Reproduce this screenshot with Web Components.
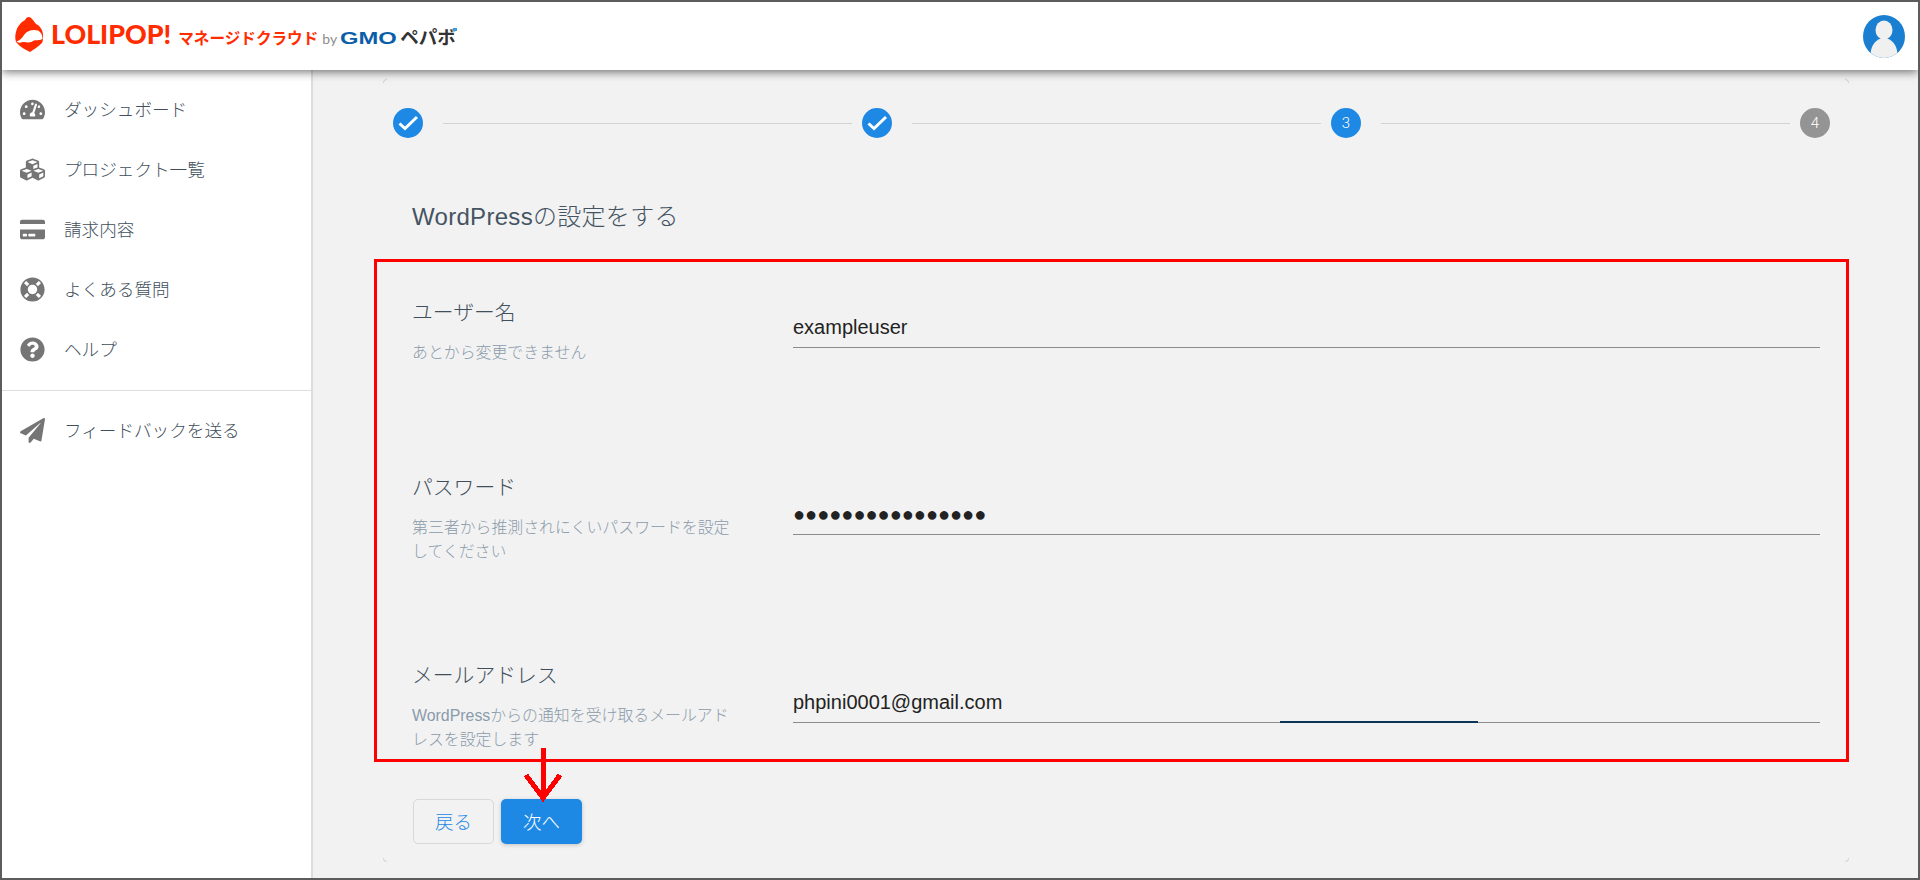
<!DOCTYPE html>
<html lang="ja"><head><meta charset="utf-8"><title>LOLIPOP マネージドクラウド</title>
<style>
html,body{margin:0;padding:0;height:880px;overflow:hidden;background:#f2f2f2;font-family:"Liberation Sans","Noto Sans CJK JP",sans-serif}
</style></head>
<body>
<app-shell>
  <app-header slot="header"></app-header>
  <side-nav slot="nav">
    <nav-item icon="gauge">ダッシュボード</nav-item>
    <nav-item icon="cubes">プロジェクト一覧</nav-item>
    <nav-item icon="card">請求内容</nav-item>
    <nav-item icon="ring">よくある質問</nav-item>
    <nav-item icon="help">ヘルプ</nav-item>
    <nav-item icon="plane" slot="after">フィードバックを送る</nav-item>
  </side-nav>
  <wizard-card slot="main">
    <step-bar></step-bar>
    <h2>WordPressの設定をする</h2>
    <form-row label="ユーザー名" sub="あとから変更できません"><text-field>exampleuser</text-field></form-row>
    <form-row label="パスワード" sub="第三者から推測されにくいパスワードを設定してください"><text-field>●●●●●●●●●●●●●●●●</text-field></form-row>
    <form-row label="メールアドレス" sub="WordPressからの通知を受け取るメールアドレスを設定します"><text-field focus>phpini0001@gmail.com</text-field></form-row>
    <wizard-actions></wizard-actions>
  </wizard-card>
  <annot-overlay slot="overlay"></annot-overlay>
</app-shell>
<script>
const ICONS={
gauge:['0 0 576 512','M288 32C128.94 32 0 160.94 0 320c0 52.8 14.25 102.26 39.06 144.8 5.61 9.62 16.3 15.2 27.44 15.2h443c11.14 0 21.83-5.58 27.44-15.2C561.75 422.26 576 372.8 576 320c0-159.06-128.94-288-288-288zm0 64c14.71 0 26.58 10.13 30.32 23.65-1.11 2.26-2.64 4.23-3.45 6.67l-9.22 27.67c-5.13 3.49-10.97 6.01-17.64 6.01-17.67 0-32-14.33-32-32S270.33 96 288 96zM96 384c-17.67 0-32-14.33-32-32s14.33-32 32-32 32 14.33 32 32-14.33 32-32 32zm48-160c-17.67 0-32-14.33-32-32s14.33-32 32-32 32 14.33 32 32-14.33 32-32 32zm246.77-72.41l-61.33 184C343.13 347.33 352 364.54 352 384c0 11.72-3.38 22.55-8.88 32H232.88c-5.5-9.45-8.88-20.28-8.88-32 0-33.94 26.5-61.43 59.9-63.59l61.34-184.01c4.17-12.56 17.73-19.45 30.36-15.17 12.57 4.19 19.35 17.79 15.17 30.36zm14.66 57.2l15.52-46.55c3.47-1.29 7.13-2.23 11.05-2.23 17.67 0 32 14.33 32 32s-14.33 32-32 32c-11.38-.01-20.89-6.28-26.57-15.22zM480 384c-17.67 0-32-14.33-32-32s14.33-32 32-32 32 14.33 32 32-14.33 32-32 32z'],
cubes:['0 0 512 512','M488.6 250.2L392 214V105.5c0-15-9.3-28.4-23.4-33.7l-100-37.5c-8.1-3.1-17.1-3.1-25.3 0l-100 37.5c-14.1 5.3-23.4 18.7-23.4 33.7V214l-96.6 36.2C9.3 255.5 0 268.9 0 283.9V394c0 13.6 7.7 26.1 19.9 32.2l100 50c10.1 5.1 22.1 5.1 32.2 0l103.9-52 103.9 52c10.1 5.1 22.1 5.1 32.2 0l100-50c12.2-6.1 19.9-18.6 19.9-32.2V283.9c0-15-9.3-28.4-23.4-33.7zM358 214.8l-85 31.9v-68.2l85-37v73.3zM154 104.1l102-38.2 102 38.2v.6l-102 41.4-102-41.4v-.6zm84 291.1l-85 42.5v-79.1l85-38.8v75.4zm0-112l-102 41.4-102-41.4v-.6l102-38.2 102 38.2v.6zm240 112l-85 42.5v-79.1l85-38.8v75.4zm0-112l-102 41.4-102-41.4v-.6l102-38.2 102 38.2v.6z'],
card:['0 0 576 512','M0 432c0 26.5 21.5 48 48 48h480c26.5 0 48-21.5 48-48V256H0v176zm192-68c0-6.6 5.4-12 12-12h136c6.6 0 12 5.4 12 12v40c0 6.6-5.4 12-12 12H204c-6.6 0-12-5.4-12-12v-40zm-128 0c0-6.6 5.4-12 12-12h72c6.6 0 12 5.4 12 12v40c0 6.6-5.4 12-12 12H76c-6.6 0-12-5.4-12-12v-40zM576 80v48H0V80c0-26.5 21.5-48 48-48h480c26.5 0 48 21.5 48 48z'],
ring:['0 0 512 512','M256 8C119.033 8 8 119.033 8 256s111.033 248 248 248 248-111.033 248-248S392.967 8 256 8zm173.696 119.559l-63.399 63.399c-10.987-18.559-26.67-34.252-45.255-45.255l63.399-63.399a218.396 218.396 0 0 1 45.255 45.255zM256 352c-53.019 0-96-42.981-96-96s42.981-96 96-96 96 42.981 96 96-42.981 96-96 96zM127.559 82.304l63.399 63.399c-18.559 10.987-34.252 26.67-45.255 45.255l-63.399-63.399a218.372 218.372 0 0 1 45.255-45.255zM82.304 384.441l63.399-63.399c10.987 18.559 26.67 34.252 45.255 45.255l-63.399 63.399a218.396 218.396 0 0 1-45.255-45.255zm302.137 45.255l-63.399-63.399c18.559-10.987 34.252-26.67 45.255-45.255l63.399 63.399a218.403 218.403 0 0 1-45.255 45.255z'],
help:['0 0 512 512','M504 256c0 136.997-111.043 248-248 248S8 392.997 8 256C8 119.083 119.043 8 256 8s248 111.083 248 248zM262.655 90c-54.497 0-89.255 22.957-116.549 63.758-3.536 5.286-2.353 12.415 2.715 16.258l34.699 26.31c5.205 3.947 12.621 3.008 16.665-2.122 17.864-22.658 30.113-35.797 57.303-35.797 20.429 0 45.698 13.148 45.698 32.958 0 14.976-12.363 22.667-32.534 33.976C247.128 238.528 216 254.941 216 296v4c0 6.627 5.373 12 12 12h56c6.627 0 12-5.373 12-12v-1.333c0-28.462 83.186-29.647 83.186-106.667 0-58.002-60.165-102-116.531-102zM256 338c-25.365 0-46 20.635-46 46 0 25.364 20.635 46 46 46s46-20.636 46-46c0-25.365-20.635-46-46-46z'],
plane:['0 0 512 512','M476 3.2L12.5 270.6c-18.1 10.4-15.8 35.6 2.2 43.2L121 358.4l287.3-253.2c5.5-4.9 13.3 2.6 8.6 8.3L176 407v80.5c0 23.6 28.5 32.9 42.5 15.8L282 426l124.6 52.2c14.2 6 30.4-2.9 33-18.2l72-432C515 7.8 493.3-6.8 476 3.2z']
};
function def(name,html){
  customElements.define(name,class extends HTMLElement{
    constructor(){super();this.attachShadow({mode:'open'});}
    connectedCallback(){if(!this.shadowRoot.innerHTML)this.shadowRoot.innerHTML=typeof html==='function'?html(this):html;}
  });
}
def('app-shell',`<style>
:host{display:flex;flex-direction:column;box-sizing:border-box;width:1920px;height:880px;border:2px solid #5c5c5c;position:relative;overflow:hidden;background:#f2f2f2}
.body{display:flex;flex:1;min-height:0}
::slotted([slot=header]){position:relative;z-index:2}
</style><slot name="header"></slot><div class="body"><slot name="nav"></slot><slot name="main"></slot></div><slot name="overlay"></slot>`);

def('app-header',`<style>
:host{display:flex;align-items:center;justify-content:space-between;height:68px;background:#fff;box-shadow:0 2px 9px rgba(0,0,0,.55);padding:0 13px;box-sizing:border-box;flex:none}
.logo{display:flex;align-items:baseline;height:68px;position:relative;padding-left:36px;box-sizing:border-box;padding-top:16px;white-space:nowrap}
svg.m{position:absolute;left:0;top:15px}
.lol{font:900 26.8px Lato,"Liberation Sans",sans-serif;color:#ff2c00;margin-right:7px}
.mc{font:700 15.6px "Noto Sans CJK JP",sans-serif;color:#ff2c00;margin-right:4px}
.by{font:400 14px Lato,"Liberation Sans",sans-serif;color:#8d8d8d;margin-right:3px}
.gmo{display:inline-block;width:57px;font:700 16.5px "Liberation Sans",sans-serif;color:#0b5ea8}
.gmo b{display:inline-block;transform:scaleX(1.44);transform-origin:0 50%}
.pb{font:700 18.5px "Noto Sans CJK JP",sans-serif;color:#333;margin-left:3px;position:relative}
.pb i{position:absolute;right:-1px;top:5px;width:4px;height:3px;background:#3b9be0}
.av{display:block}
</style>
<div class="logo">
<svg class="m" width="28" height="35" viewBox="15 17 28 35"><path fill="#ff2c00" d="M29 17C31 17 33 20 36 24C40 26 43 30 43 35C43 39 43 41 42 43C38 47 33 50 30 52C26 50 20 47 16 42C15 39 15 35 16 32C17 27 21 22 25 20C26 18 27 17 29 17Z"/><path fill="#fff" d="M16.500 41.500C20 40.500 22 38 24 35C27 30.500 33 29 38 30.500C41 32 42.500 35 42.500 39C39 41 36 39.500 33 41C29 44 25 41 21 42.500C19 43 17.500 42.500 16.500 41.500Z"/></svg>
<span class="lol">LOLIPOP!</span><span class="mc">マネージドクラウド</span><span class="by">by</span><span class="gmo"><b>GMO</b></span><span class="pb">ペパボ<i></i></span>
</div>
<svg class="av" width="42" height="43" viewBox="0 0 42 43"><defs><clipPath id="c"><ellipse cx="21" cy="21.500" rx="21" ry="21.500"/></clipPath></defs><ellipse cx="21" cy="21.500" rx="21" ry="21.500" fill="#1a7fd0"/><g clip-path="url(#c)" fill="#f0f0f0"><ellipse cx="21" cy="15" rx="8.500" ry="9.500"/><path d="M8 43C6 32 13 23 21 23C29 23 36 32 34 43Z"/></g></svg>`);

def('side-nav',`<style>
:host{display:block;flex:none;box-sizing:border-box;width:311px;background:#fff;border-right:2px solid #dcdcdc;padding-top:9px;position:relative;z-index:1}
.d{height:1px;background:#dedede;margin:11px 0 9px}
</style><slot></slot><div class="d"></div><slot name="after"></slot>`);

def('nav-item',h=>{const [vb,d]=ICONS[h.getAttribute('icon')];return `<style>
:host{display:flex;align-items:center;height:60px;padding-left:18px;gap:19px;color:#414f5c;font-size:17.6px;font-weight:300;white-space:nowrap}
svg{width:25px;height:25px;fill:#757575;flex:none}
span{padding-bottom:2px}
</style><svg viewBox="${vb}"><path d="${d}"/></svg><span><slot></slot></span>`});

def('wizard-card',`<style>
:host{display:flex;flex-direction:column;box-sizing:border-box;width:1466px;height:783px;margin:9px 0 0 70px;padding:29px 29px 0 29px;position:relative}
::slotted(h2){margin:64px 0 5px;font-size:24px;font-weight:300;line-height:30px;height:30px;color:#455463;letter-spacing:.3px}
.c{position:absolute;width:3px;height:3px;border:0 solid #d4d4d4}
.tl{left:0;top:0;border-width:1px 0 0 1px;border-top-left-radius:4px}
.tr{right:0;top:0;border-width:1px 1px 0 0;border-top-right-radius:4px}
.bl{left:0;bottom:0;border-width:0 0 1px 1px;border-bottom-left-radius:4px}
.br{right:0;bottom:0;border-width:0 1px 1px 0;border-bottom-right-radius:4px}
</style><i class="c tl"></i><i class="c tr"></i><i class="c bl"></i><i class="c br"></i><slot></slot>`);

def('step-bar',`<style>
:host{display:flex;align-items:center;height:30px;margin:0 -10px 0 -19px;flex:none}
.s{width:30px;height:30px;border-radius:50%;background:#1e88e5;color:#fff;display:flex;align-items:center;justify-content:center;font:300 15px Roboto,sans-serif;flex:none}
.s.off{background:#949494}
.l{flex:1;height:1px;background:#d2d2d2;margin:0 10px 0 20px}
svg{display:block}
</style>
<div class="s"><svg width="30" height="30" viewBox="0 0 30 30"><path d="M6.500 15.500L12 20.500L24 9" fill="none" stroke="#fff" stroke-width="3"/></svg></div><div class="l"></div>
<div class="s"><svg width="30" height="30" viewBox="0 0 30 30"><path d="M6.500 15.500L12 20.500L24 9" fill="none" stroke="#fff" stroke-width="3"/></svg></div><div class="l"></div>
<div class="s">3</div><div class="l"></div><div class="s off">4</div>`);

def('form-row',h=>`<style>
:host{display:grid;grid-template-columns:330px 1fr;column-gap:51px;align-items:center;height:187.5px;flex:none}
.txt{padding-top:3px}
.lab{font-size:20.8px;line-height:26px;margin-bottom:15px;color:#414f5c;font-weight:300}
.sub{font-size:15.9px;line-height:24px;color:#8a9bab;font-weight:300}
</style><div class="txt"><div class="lab">${h.getAttribute('label')}</div><div class="sub">${h.getAttribute('sub')}</div></div><slot></slot>`);

def('text-field',`<style>
:host{display:block;box-sizing:border-box;height:34px;line-height:26px;font-size:20px;color:#222;border-bottom:1px solid #8c8c8c;position:relative;padding-bottom:7px;white-space:nowrap}
:host([focus])::after{content:"";position:absolute;left:487px;width:198px;height:2px;bottom:-1px;background:#0d3557}
</style><slot></slot>`);

def('wizard-actions',`<style>
:host{display:flex;gap:7px;height:45px;flex:none;margin:-.5px 0 0 1px}
.b{box-sizing:border-box;width:81px;height:45px;border-radius:5px;display:flex;align-items:center;justify-content:center;font-size:18.5px;font-weight:300;padding-bottom:2px}
.back{border:1px solid #d8d8d8;color:#1e88e5}
.next{background:#1e88e5;color:#fff;box-shadow:0 1px 4px rgba(0,0,0,.2)}
</style><div class="b back">戻る</div><div class="b next">次へ</div>`);

def('annot-overlay',`<style>
:host{position:absolute;inset:0;pointer-events:none;z-index:3}
.box{position:absolute;left:372px;top:257px;width:1475px;height:503px;box-sizing:border-box;border:3px solid #f00}
svg{position:absolute;left:518.500px;top:746px}
</style><div class="box"></div>
<svg width="44" height="54" viewBox="0 0 44 54"><path d="M22 0V50M5 27L22 50L39 27" fill="none" stroke="#f00" stroke-width="5" shape-rendering="crispEdges"/></svg>`);
</script>
</body></html>
